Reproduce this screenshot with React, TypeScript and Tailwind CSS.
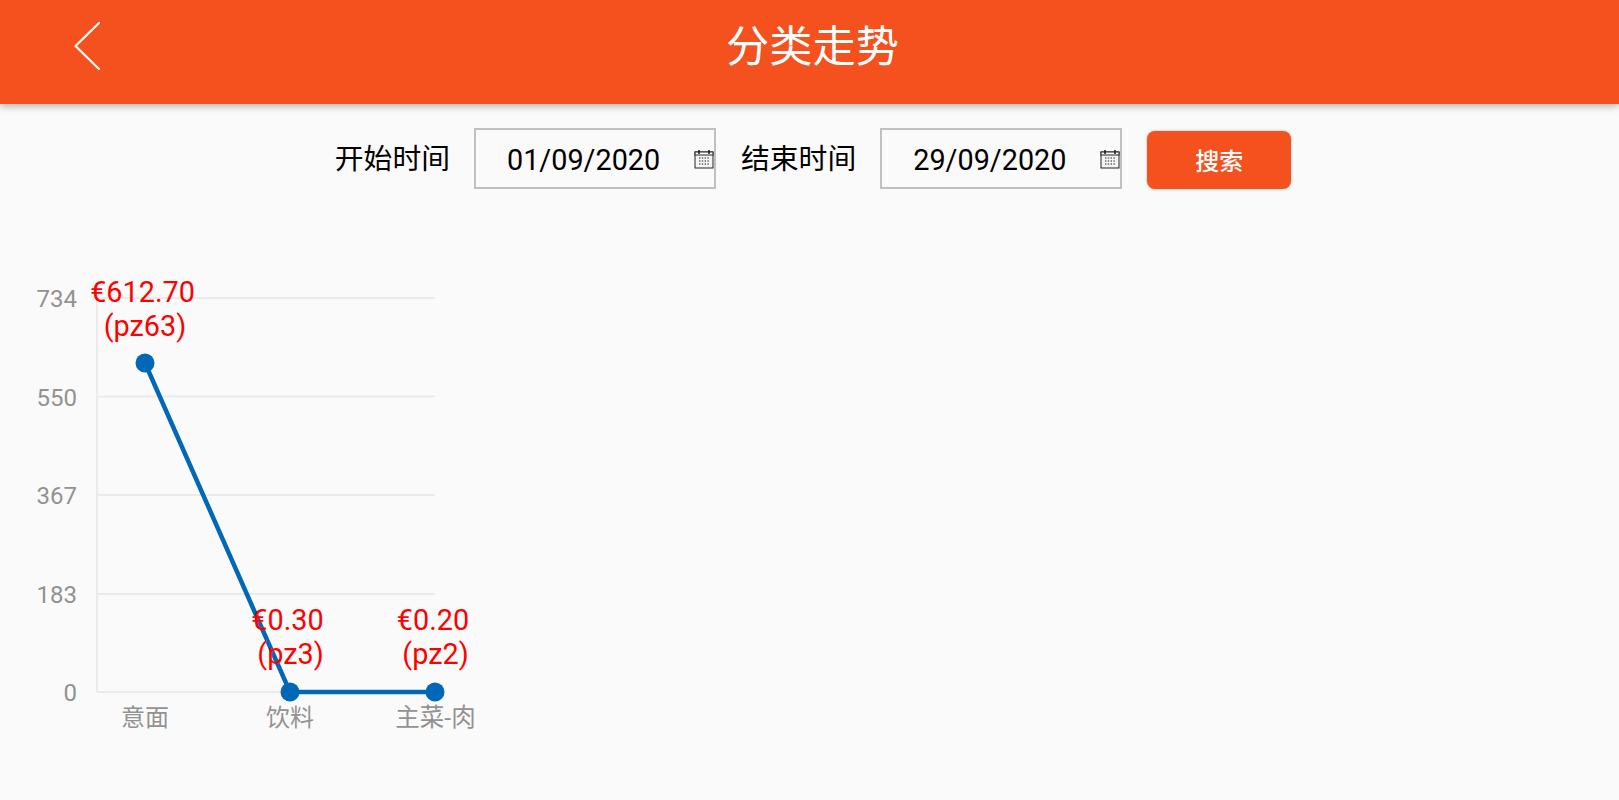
const sans = "font-['Roboto','Noto_Sans_CJK_SC',sans-serif]";

function CalendarIcon() {
  return (
    <svg width="20" height="20" viewBox="0 0 20 20" className="shrink-0">
      <rect x="1" y="3" width="18" height="16" fill="#f4f4f4" stroke="#222" strokeWidth="1" />
      <rect x="1" y="3" width="18" height="3" fill="#fff" stroke="#222" strokeWidth="1" />
      <path d="M5 1v4M15 1v4" stroke="#111" strokeWidth="1.4" />
      <path d="M5 9h10M5 12h10M5 15h10" stroke="#666" strokeWidth="1.4" strokeDasharray="1.4 1.4" />
    </svg>
  );
}

function DateField({ value }: { value: string }) {
  return (
    <div className="flex h-[61px] w-[242px] items-center border-2 border-[#c0c0c0] pl-[31px]">
      <span className="flex-1 pt-[3px] text-[28.8px] leading-none text-black">{value}</span>
      <CalendarIcon />
    </div>
  );
}

const grid = [298, 396.5, 495, 594, 692];
const ticks = ["734", "550", "367", "183", "0"];
const o = 218;
const pts: [number, number][] = [[145, 363 - o], [290, 692 - o], [435, 692 - o]];

function Chart() {
  const labelClass = "fill-[#ff0000] text-[28.8px]";
  return (
    <svg width="520" height="560" className="block" style={{ fontFamily: "Roboto, 'Noto Sans CJK SC', sans-serif" }}>
      {grid.map((y) => (
        <line key={y} x1="97" x2="435" y1={y - o} y2={y - o} stroke="#ebebeb" strokeWidth="2" />
      ))}
      <line x1="97" x2="97" y1={298 - o} y2={692 - o} stroke="#ebebeb" strokeWidth="2" />
      {grid.map((y, i) => (
        <text key={y} x="77" y={y - o + 9} textAnchor="end" className="fill-[#929292] text-[24px]">{ticks[i]}</text>
      ))}
      <polyline points={pts.map((p) => p.join(",")).join(" ")} fill="none" stroke="#0068b7" strokeWidth="4.5" />
      {pts.map((p) => (
        <circle key={p[0]} cx={p[0]} cy={p[1]} r="9.5" fill="#0068b7" />
      ))}
      <text x="142.5" y={302 - o} textAnchor="middle" className={labelClass}>€612.70</text>
      <text x="145" y={336 - o} textAnchor="middle" className={labelClass}>(pz63)</text>
      <text x="287.5" y={630 - o} textAnchor="middle" className={labelClass}>€0.30</text>
      <text x="290.5" y={664 - o} textAnchor="middle" className={labelClass}>(pz3)</text>
      <text x="433" y={630 - o} textAnchor="middle" className={labelClass}>€0.20</text>
      <text x="435.5" y={664 - o} textAnchor="middle" className={labelClass}>(pz2)</text>
      <text x="145" y={726 - o} textAnchor="middle" className="fill-[#929292] text-[24px]">意面</text>
      <text x="290" y={726 - o} textAnchor="middle" className="fill-[#929292] text-[24px]">饮料</text>
      <text x="435.5" y={726 - o} textAnchor="middle" className="fill-[#929292] text-[24.5px]">主菜-肉</text>
    </svg>
  );
}

export default function App() {
  return (
    <div className={`h-[800px] overflow-hidden bg-[#fafafa] ${sans}`}>
      <header className="relative flex h-[104px] items-center bg-[#f4511e] shadow-[0_2px_8px_rgba(0,0,0,0.3)]">
        <svg width="30" height="50" viewBox="0 0 30 50" className="absolute left-[72px] top-[21px]">
          <path d="M27 2 L3.5 25 L27 48" fill="none" stroke="#fff" strokeWidth="2.2" strokeLinecap="round" strokeLinejoin="round" />
        </svg>
        <h1 className="w-full pb-[8px] pl-[6px] text-center text-[43.2px] font-normal leading-none text-white">分类走势</h1>
      </header>
      <div className="flex items-start justify-center pl-[7px] pt-[24px]">
        <span className="flex h-[61px] items-center pt-[3px] text-[28.8px] text-black">开始时间</span>
        <div className="ml-[24px]"><DateField value="01/09/2020" /></div>
        <span className="ml-[25px] flex h-[61px] items-center pt-[3px] text-[28.8px] text-black">结束时间</span>
        <div className="ml-[24px]"><DateField value="29/09/2020" /></div>
        <button className="ml-[25px] mt-[3px] flex h-[58px] w-[144px] items-center justify-center rounded-[8px] bg-[#f4511e] pt-[3px] text-[24px] font-medium text-white shadow-[0_0_3px_rgba(0,0,0,0.25)]">搜索</button>
      </div>
      <div className="pt-[29px]">
        <Chart />
      </div>
    </div>
  );
}
